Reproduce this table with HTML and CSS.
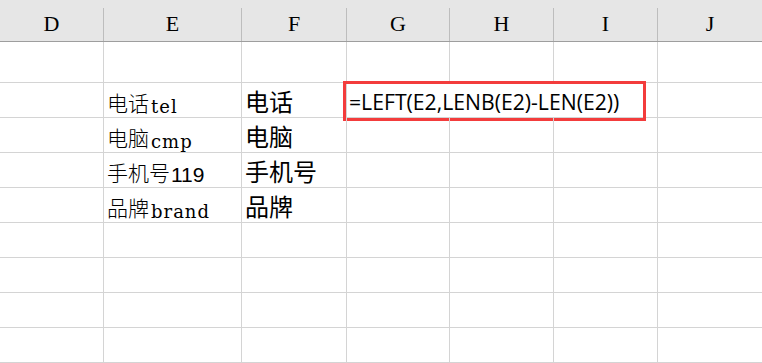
FILE: index.html
```html
<!DOCTYPE html>
<html lang="zh-CN">
<head>
    <meta charset="UTF-8">
    <meta name="viewport" content="width=device-width, initial-scale=1.0">
    <title>工作表</title>
    <link rel="stylesheet" href="styles.css">
</head>
<body>
    <div class="sheet">
        <div class="row head">
            <div class="cell">D</div>
            <div class="cell">E</div>
            <div class="cell">F</div>
            <div class="cell">G</div>
            <div class="cell">H</div>
            <div class="cell">I</div>
            <div class="cell">J</div>
        </div>

        <div class="row first">
            <div class="cell"></div><div class="cell"></div><div class="cell"></div>
            <div class="cell"></div><div class="cell"></div><div class="cell"></div><div class="cell"></div>
        </div>

        <div class="row">
            <div class="cell"></div>
            <div class="cell src">电话<span class="lat">tel</span></div>
            <div class="cell res">电话</div>
            <div class="cell formula spill">=LEFT(E2,LENB(E2)-LEN(E2))</div>
            <div class="cell spill"></div><div class="cell"></div><div class="cell"></div>
            <div class="mark"></div>
        </div>

        <div class="row">
            <div class="cell"></div>
            <div class="cell src">电脑<span class="lat">cmp</span></div>
            <div class="cell res">电脑</div>
            <div class="cell"></div><div class="cell"></div><div class="cell"></div><div class="cell"></div>
        </div>

        <div class="row">
            <div class="cell"></div>
            <div class="cell src">手机号<span class="num">119</span></div>
            <div class="cell res">手机号</div>
            <div class="cell"></div><div class="cell"></div><div class="cell"></div><div class="cell"></div>
        </div>

        <div class="row">
            <div class="cell"></div>
            <div class="cell src">品牌<span class="lat">brand</span></div>
            <div class="cell res">品牌</div>
            <div class="cell"></div><div class="cell"></div><div class="cell"></div><div class="cell"></div>
        </div>

        <div class="row">
            <div class="cell"></div><div class="cell"></div><div class="cell"></div>
            <div class="cell"></div><div class="cell"></div><div class="cell"></div><div class="cell"></div>
        </div>
        <div class="row">
            <div class="cell"></div><div class="cell"></div><div class="cell"></div>
            <div class="cell"></div><div class="cell"></div><div class="cell"></div><div class="cell"></div>
        </div>
        <div class="row">
            <div class="cell"></div><div class="cell"></div><div class="cell"></div>
            <div class="cell"></div><div class="cell"></div><div class="cell"></div><div class="cell"></div>
        </div>
        <div class="row">
            <div class="cell"></div><div class="cell"></div><div class="cell"></div>
            <div class="cell"></div><div class="cell"></div><div class="cell"></div><div class="cell"></div>
        </div>
    </div>
</body>
</html>
```

FILE: styles.css
```css
* {
    box-sizing: border-box;
    margin: 0;
    padding: 0;
}

body {
    background: white;
    color: #000;
    font-family: "Noto Sans CJK SC", sans-serif;
    overflow: hidden;
}

.sheet {
    width: 762px;
}

.row {
    position: relative;
    display: grid;
    grid-template-columns: 104px 138px 105px 103px 104px 104px 105px;
    height: 35px;
    border-bottom: 1px solid #d4d4d4;
}

.cell {
    display: flex;
    align-items: flex-end;
    padding: 0 4px 3px;
    border-right: 1px solid #d4d4d4;
    white-space: nowrap;
}

/* text running into the next cell hides the gridline */
.cell.spill {
    border-right-color: transparent;
}

/* column letters */
.head {
    height: 42px;
    padding-top: 8px;
    background: #e6e6e6;
    border-bottom: 1px solid #9e9e9e;
}

.head .cell {
    justify-content: center;
    align-items: center;
    padding: 0 0 2px;
    border-right-color: #bdbdbd;
    font-family: "Liberation Serif", serif;
    font-size: 22px;
}

.row.first {
    height: 41px;
}

.src {
    font-size: 21px;
    font-weight: 300;
    padding-left: 3px;
    padding-bottom: 1px;
}

.lat {
    font-family: "DejaVu Serif", serif;
    font-size: 18px;
    font-weight: normal;
    letter-spacing: 1px;
    margin-left: 2px;
}

.num {
    font-family: "Liberation Sans", sans-serif;
    margin-left: 1px;
}

.res {
    font-size: 24px;
    padding-left: 3px;
    padding-bottom: 0;
}

.formula {
    overflow: visible;
    padding-left: 2px;
    padding-bottom: 2px;
    font-family: "Open Sans", sans-serif;
    font-size: 21.2px;
}

/* red outline around the formula */
.mark {
    position: absolute;
    left: 343px;
    top: -2px;
    width: 303px;
    height: 40px;
    border: 3px solid #f33c3c;
    pointer-events: none;
}
```
